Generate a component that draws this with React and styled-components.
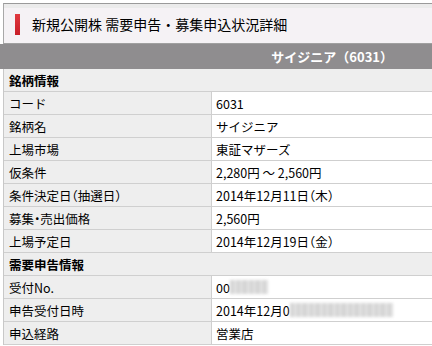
import React from "react";
import styled, { createGlobalStyle } from "styled-components";

const Global = createGlobalStyle`
  html, body { margin: 0; padding: 0; background: #fff; overflow: hidden; }
  body { font-family: "Noto Sans CJK JP", "Noto Sans", sans-serif; color: #000; }
`;

const Page = styled.div`
  padding: 3px 0 0 3px;
  width: 440px;
`;

const TitleBox = styled.div`
  border-top: 1px solid #9a9a9a;
  border-left: 1px solid #a8a8a8;
  border-bottom: 1px solid #a0a0a0;
  background: linear-gradient(#ebebeb 0, #ebebeb 4px, #f5f2f5 4px);
  height: 39px;
  display: flex;
  align-items: center;
  padding-left: 11px;
  gap: 12px;
`;

const RedMark = styled.span`
  width: 5px;
  height: 21px;
  background: linear-gradient(#e0393f, #c81e28);
  margin-top: 1px;
`;

const Title = styled.h1`
  margin: 0;
  font-size: 14px;
  font-weight: normal;
  line-height: 1;
`;

const NameBar = styled.div`
  margin-left: -3px;
  background: #8f8d8f;
  height: 25px;
  display: flex;
  align-items: center;
  justify-content: flex-end;
  padding-right: 50px;
  color: #fff;
  font-weight: bold;
  font-size: 13px;
`;

const Table = styled.div`
  border-left: 1px solid #c8c8c8;
  display: grid;
  grid-template-columns: 208px 1fr;
`;

const Cell = styled.div`
  height: 22px;
  border-bottom: 1px solid #cfcfcf;
  display: flex;
  align-items: center;
  font-size: 12.5px;
  font-feature-settings: "halt";
`;

const SectionHead = styled(Cell)`
  grid-column: 1 / -1;
  background: #eeeeee;
  padding-left: 5px;
  font-weight: bold;
`;

const Label = styled(Cell)`
  background: #eeeeee;
  border-right: 1px solid #cfcfcf;
  padding-left: 5px;
`;

const Value = styled(Cell)`
  background: #fff;
  padding-left: 4px;
`;

const Blur = styled.span`
  display: inline-block;
  width: ${(p) => p.w}px;
  height: 14px;
  background: repeating-linear-gradient(90deg, #cacaca 0 4px, #dcdcdc 4px 7px, #c4c4c4 7px 9px, #d6d6d6 9px 13px);
  filter: blur(1.5px);
  opacity: 0.8;
`;

const section1 = [
  ["コード", "6031"],
  ["銘柄名", "サイジニア"],
  ["上場市場", "東証マザーズ"],
  ["仮条件", "2,280円 ～ 2,560円"],
  ["条件決定日（抽選日）", "2014年12月11日（木）"],
  ["募集・売出価格", "2,560円"],
  ["上場予定日", "2014年12月19日（金）"],
];

export default function App() {
  return (
    <>
      <Global />
      <Page>
        <TitleBox>
          <RedMark />
          <Title>新規公開株 需要申告・募集申込状況詳細</Title>
        </TitleBox>
        <NameBar>サイジニア（6031）</NameBar>
        <Table>
          <SectionHead>銘柄情報</SectionHead>
          {section1.map(([l, v]) => (
            <React.Fragment key={l}>
              <Label>{l}</Label>
              <Value>{v}</Value>
            </React.Fragment>
          ))}
          <SectionHead>需要申告情報</SectionHead>
          <Label>受付No.</Label>
          <Value>
            00<Blur w={38} />
          </Value>
          <Label>申告受付日時</Label>
          <Value>
            2014年12月0<Blur w={103} />
          </Value>
          <Label>申込経路</Label>
          <Value>営業店</Value>
        </Table>
      </Page>
    </>
  );
}
